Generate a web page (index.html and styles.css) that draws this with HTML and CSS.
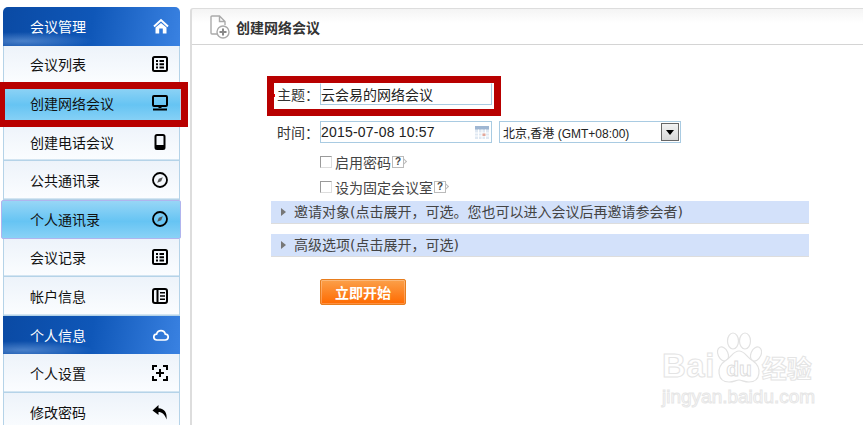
FILE: index.html
```html
<!DOCTYPE html>
<html lang="zh-CN">
<head>
    <meta charset="UTF-8">
    <meta name="viewport" content="width=device-width, initial-scale=1.0">
    <title>创建网络会议</title>
    <link rel="stylesheet" href="styles.css">
</head>
<body>
    <div class="page">
        <div class="sidebar">
            <div class="nav-head first">
                <span>会议管理</span>
                <svg class="icon" viewBox="0 0 16 16"><path d="M8 5 L13.500 9.500 V15.500 H9.800 V10.500 H6.200 V15.500 H2.500 V9.500 Z" fill="#fff"/><path d="M1 8.500 L8 2 L15 8.500" fill="none" stroke="#fff" stroke-width="2"/></svg>
            </div>
            <div class="nav-item">
                <span>会议列表</span>
                <svg class="icon" viewBox="0 0 16 16"><rect x="1" y="1" width="14" height="14" rx="1.5" fill="none" stroke="#000" stroke-width="2"/><path d="M4 4h2v2H4zM7.500 4H12v2H7.500zM4 7.200h2v2H4zM7.500 7.200H12v2H7.500zM4 10.400h2v2H4zM7.500 10.400H12v2H7.500z"/></svg>
            </div>
            <div class="nav-item active">
                <span>创建网络会议</span>
                <svg class="icon" viewBox="0 0 16 16"><rect x="1" y="1" width="14" height="10" rx="1" fill="none" stroke="#000" stroke-width="2"/><path d="M6.500 11h3v2h-3zM1 13.500h14v2H1z"/></svg>
            </div>
            <div class="nav-item">
                <span>创建电话会议</span>
                <svg class="icon" viewBox="0 0 16 16"><rect x="3.500" y="1" width="9" height="14" rx="1.500" fill="none" stroke="#000" stroke-width="2"/><path d="M3.500 11h9v4h-9z"/></svg>
            </div>
            <div class="nav-item">
                <span>公共通讯录</span>
                <svg class="icon" viewBox="0 0 16 16"><circle cx="8" cy="8" r="7" fill="none" stroke="#000" stroke-width="1.800"/><path d="M10.800 5.200 L9.200 9.200 L5.200 10.800 L6.800 6.800 Z" fill="#555"/></svg>
            </div>
            <div class="nav-item active wide">
                <span>个人通讯录</span>
                <svg class="icon" viewBox="0 0 16 16"><circle cx="8" cy="8" r="7" fill="none" stroke="#000" stroke-width="1.800"/><path d="M10.800 5.200 L9.200 9.200 L5.200 10.800 L6.800 6.800 Z" fill="#555"/></svg>
            </div>
            <div class="nav-item">
                <span>会议记录</span>
                <svg class="icon" viewBox="0 0 16 16"><rect x="1" y="1" width="14" height="14" rx="1.500" fill="none" stroke="#000" stroke-width="2"/><path d="M4 4h2v2H4zM7.500 4H12v2H7.500zM4 7.200h2v2H4zM7.500 7.200H12v2H7.500zM4 10.400h2v2H4zM7.500 10.400H12v2H7.500z"/></svg>
            </div>
            <div class="nav-item">
                <span>帐户信息</span>
                <svg class="icon" viewBox="0 0 16 16"><rect x="1" y="1" width="14" height="14" rx="2" fill="none" stroke="#000" stroke-width="2"/><path d="M4.500 1h2v14h-2zM8 4h5v1.500H8zM8 7.200h5v1.500H8zM8 10.400h5v1.500H8z"/></svg>
            </div>
            <div class="nav-head">
                <span>个人信息</span>
                <svg class="icon" viewBox="0 0 16 16"><path d="M4 13 C1.800 13 0.800 11.500 0.800 10 C0.800 8.400 2 7.200 3.600 7.100 C4.200 4.800 6 3.600 8 3.600 C10.200 3.600 11.800 5 12.300 7.100 C14 7.200 15.200 8.500 15.200 10 C15.200 11.600 14 13 12.200 13 Z" fill="none" stroke="#fff" stroke-width="1.700"/></svg>
            </div>
            <div class="nav-item">
                <span>个人设置</span>
                <svg class="icon" viewBox="0 0 16 16"><path d="M5 1H1V5M11 1h4V5M5 15H1V11M11 15h4V11" fill="none" stroke="#000" stroke-width="2"/><path d="M7 4h2v3h3v2H9v3H7V9H4V7h3z"/></svg>
            </div>
            <div class="nav-item">
                <span>修改密码</span>
                <svg class="icon" viewBox="0 0 16 16"><path d="M6.500 1 L0.500 6.500 L6.500 11 L6.500 8 C10 8 12.600 10 14.500 15.500 C15.400 9 12.600 4.600 6.500 4.200 Z"/></svg>
            </div>
        </div>

        <div class="main">
            <div class="title-bar">
                <svg class="title-icon" viewBox="0 0 20 24"><path d="M8 19 H2 a1 1 0 0 1 -1 -1 V2 a1 1 0 0 1 1 -1 H9.500 L15 6.500 V10 M9.500 1 V6.500 H15" fill="none" stroke="#aaa" stroke-width="1.400"/><circle cx="13" cy="17" r="6" fill="#fff" stroke="#aaa" stroke-width="1.400"/><path d="M9.500 17h7M13 13.500v7" stroke="#888" stroke-width="2"/></svg>
                <span>创建网络会议</span>
            </div>

            <div class="form">
                <div class="form-row">
                    <label class="form-label required">主题：</label>
                    <div class="field subject">云会易的网络会议</div>
                </div>
                <div class="form-row time-row">
                    <label class="form-label">时间：</label>
                    <div class="field date">
                        <span>2015-07-08 10:57</span>
                        <svg class="cal" viewBox="0 0 14 13"><rect width="14" height="13" fill="#dfe8f2"/><rect width="14" height="3.500" fill="#9fb6d2"/><path d="M0 7h14M0 10h14M3.500 3.500V13M7 3.500V13M10.500 3.500V13" stroke="#fff"/><rect x="7.500" y="7.500" width="3" height="2.500" fill="#e3a79a"/></svg>
                    </div>
                    <div class="field zone">
                        <span>北京,香港 (GMT+08:00)</span>
                        <span class="zone-arrow"></span>
                    </div>
                </div>
                <div class="check-row first-check">
                    <span class="check"></span>启用密码<span class="help">?</span>
                </div>
                <div class="check-row">
                    <span class="check"></span>设为固定会议室<span class="help">?</span>
                </div>
                <div class="fold">邀请对象(点击展开，可选。您也可以进入会议后再邀请参会者)</div>
                <div class="fold">高级选项(点击展开，可选)</div>
                <button class="start-btn">立即开始</button>
            </div>
        </div>
    </div>

    <!-- red marks drawn over the screenshot -->
    <div class="mark mark-nav"></div>
    <div class="mark mark-subject"></div>

    <div class="watermark">
        <div class="wm-top">
            <span class="wm-bai">Bai</span>
            <svg class="wm-paw" viewBox="0 0 46 52">
                <g fill="#fff" stroke="#e2e2e2" stroke-width="1.200">
                    <ellipse cx="7" cy="22" rx="5" ry="7.500" transform="rotate(-25 7 22)"/>
                    <ellipse cx="17" cy="9" rx="5.500" ry="8"/>
                    <ellipse cx="29" cy="9" rx="5.500" ry="8"/>
                    <ellipse cx="40" cy="22" rx="5" ry="7.500" transform="rotate(25 40 22)"/>
                    <path d="M23 19 C29 19 30 25 37 29 C46 35 45 50 33 50 C28 50 26 48 23 48 C20 48 18 50 13 50 C1 50 0 35 9 29 C16 25 17 19 23 19 Z"/>
                </g>
                <text x="23" y="44" text-anchor="middle" class="wm-du">du</text>
            </svg>
            <span class="wm-jy">经验</span>
        </div>
        <div class="wm-url">jingyan.baidu.com</div>
    </div>
</body>
</html>
```

FILE: styles.css
```css
* {
    box-sizing: border-box;
}
html, body {
    margin: 0;
    height: 100%;
    overflow: hidden;
    background: #fff;
}
body {
    font-family: "Noto Sans CJK SC", "Liberation Sans", sans-serif;
    font-size: 14px;
    color: #333;
}
.page {
    display: flex;
    height: 425px;
    overflow: hidden;
}

/* left menu */
.sidebar {
    width: 177px;
    margin: 7px 0 0 3px;
    flex: none;
}
.nav-head, .nav-item {
    display: flex;
    align-items: center;
    justify-content: space-between;
    height: 38.6px;
    padding: 0 11px 0 27px;
}
.nav-head {
    color: #fff;
    background:
        radial-gradient(ellipse 70px 9px at 20px 34px, rgba(150,190,240,0.45), transparent),
        linear-gradient(100deg, #0a4aa4 0%, #0f57b8 50%, #3a82e2 100%);
}
.nav-head.first {
    border-radius: 5px 5px 0 0;
}
.nav-item {
    color: #111;
    padding-left: 26px;
    background: linear-gradient(#edf3fa, #fbfdff);
    border: 1px solid #b5d3e8;
    border-top: 0;
    box-shadow: inset 0 -1px 0 #d3e5f2;
}
.nav-item.active {
    background: linear-gradient(#97d6f6, #66c4f3 55%, #8ad2f6);
    margin-right: -1px;
    padding-right: 12px;
}
.nav-item.wide {
    margin-left: -2px;
    padding-left: 28px;
    border: 1px solid #b0b4ee;
    border-radius: 2px;
    box-shadow: none;
}
.icon {
    width: 16px;
    height: 16px;
    flex: none;
}

/* right panel */
.main {
    flex: 1;
    margin: 8px 0 0 10px;
    border: 1px solid #ddd;
    border-width: 1px 0 0 2px;
    border-radius: 3px 0 0 0;
    background: linear-gradient(#f4f4f4, #fff 14px);
}
.title-bar {
    display: flex;
    align-items: center;
    height: 36px;
    padding-left: 18px;
    border-bottom: 1px solid #d4d4d4;
    font-weight: bold;
    color: #333;
}
.title-icon {
    width: 20px;
    height: 24px;
    margin-right: 6px;
}
.form {
    margin-left: 79px;
    width: 538px;
    padding-top: 38px;
}
.form-row {
    display: flex;
    align-items: center;
    height: 22px;
}
.time-row {
    margin-top: 16px;
}
.form-label {
    position: relative;
    width: 49px;
    padding-left: 6px;
    flex: none;
}
.required::before {
    content: "";
    position: absolute;
    left: 2px;
    top: 10px;
    width: 2px;
    height: 3px;
    background: #e00;
}
.field {
    display: flex;
    align-items: center;
    justify-content: space-between;
    height: 22px;
    border: 1px solid #a9cbe2;
    color: #222;
}
.subject {
    width: 172px;
    border-top-color: #fff;
    border-left-color: #a9cbe2;
}
.date {
    width: 172px;
    padding: 0 2px 0 0;
    font-family: "Liberation Sans", sans-serif;
    letter-spacing: 0.2px;
}
.zone {
    width: 182px;
    margin-left: 7px;
    padding: 0 1px 0 3px;
    font-family: "Liberation Sans", "Noto Sans CJK SC", sans-serif;
    font-size: 12px;
}
.cal {
    width: 14px;
    height: 13px;
}
.zone-arrow {
    position: relative;
    width: 18px;
    height: 18px;
    border: 1px solid #666;
    background: linear-gradient(#f2f2f2, #d8d8d8);
}
.zone-arrow::after {
    content: "";
    position: absolute;
    left: 4px;
    top: 6px;
    border: 4px solid transparent;
    border-top: 5px solid #000;
    border-bottom: 0;
}
.check-row {
    display: flex;
    align-items: center;
    height: 25px;
    padding-left: 49px;
    color: #444;
}
.first-check {
    margin-top: 6px;
}
.check {
    width: 12px;
    height: 12px;
    margin-right: 3px;
    border: 1px solid #9a9a9a;
    border-right-color: #ddd;
    border-bottom-color: #ddd;
}
.help {
    position: relative;
    width: 12px;
    height: 12px;
    margin-left: 1px;
    border: 1px solid #bbb;
    font: bold 10px/10px "Liberation Sans", sans-serif;
    text-align: center;
    color: #444;
}
.help::after {
    content: "";
    position: absolute;
    left: 8px;
    top: 2px;
    width: 4px;
    height: 4px;
    border: 1px solid #bbb;
    border-width: 1px 1px 0 0;
    transform: rotate(45deg);
}
.fold {
    position: relative;
    height: 23px;
    line-height: 23px;
    margin-top: 10px;
    padding-left: 23px;
    background: #d3e1fa;
    border-bottom: 1px solid #ddd;
    font-family: "DejaVu Sans", "Noto Sans CJK SC", sans-serif;
    color: #444;
}
.check-row + .fold {
    margin-top: 2px;
}
.fold::before {
    content: "";
    position: absolute;
    left: 10px;
    top: 7px;
    border: 4.500px solid transparent;
    border-left: 5px solid #777;
    border-right: 0;
}
.start-btn {
    display: block;
    width: 86px;
    height: 26px;
    margin: 22px 0 0 49px;
    padding: 0;
    border: 1px solid #e77d1e;
    border-radius: 2px;
    background: linear-gradient(#fba04a, #ff6a00);
    box-shadow: inset 0 0 0 1px rgba(255,255,255,0.25);
    font-family: inherit;
    font-size: 14px;
    font-weight: bold;
    color: #fff;
}

/* annotations */
.mark {
    position: absolute;
    border: 7px solid #b80000;
}
.mark-nav {
    left: 0;
    top: 82px;
    width: 188px;
    height: 45px;
    border-left-width: 5px;
}
.mark-subject {
    left: 267px;
    top: 76px;
    width: 234px;
    height: 40px;
}

/* site watermark */
.watermark {
    position: absolute;
    left: 662px;
    top: 331px;
    width: 155px;
}
.wm-top {
    display: flex;
    align-items: flex-end;
    height: 53px;
}
.wm-bai {
    font: bold 33px/36px "Liberation Sans", sans-serif;
    letter-spacing: 0.5px;
    color: #fff;
    -webkit-text-stroke: 1px #e4e4e4;
}
.wm-paw {
    width: 46px;
    height: 52px;
    margin-left: 1px;
    flex: none;
}
.wm-du {
    font: bold 21px "Liberation Sans", sans-serif;
    fill: #fff;
    stroke: #dcdcdc;
    stroke-width: 0.9;
}
.wm-jy {
    font-size: 25px;
    line-height: 34px;
    font-weight: bold;
    color: #fff;
    -webkit-text-stroke: 1px #e4e4e4;
    white-space: nowrap;
}
.wm-url {
    margin-top: 3px;
    font: 19px/20px "Liberation Sans", sans-serif;
    color: #fff;
    -webkit-text-stroke: 1px #e6e6e6;
    white-space: nowrap;
}
```
